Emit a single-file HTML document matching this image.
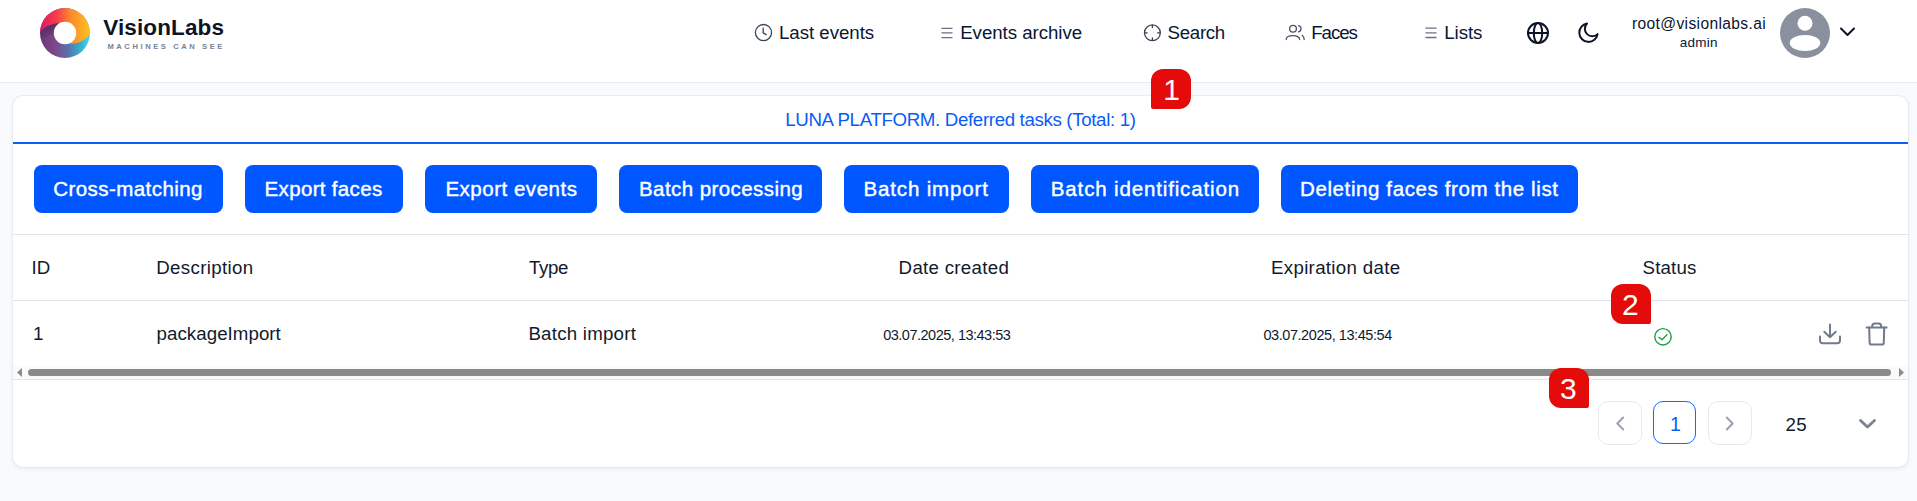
<!DOCTYPE html>
<html><head><meta charset="utf-8">
<style>
html,body{margin:0;padding:0;}
body{width:1917px;height:501px;overflow:hidden;background:#f9fafd;position:relative;font-family:"Liberation Sans",sans-serif;}
.t{position:absolute;white-space:nowrap;line-height:1;font-family:"Liberation Sans",sans-serif;}
.a{position:absolute;}
svg{position:absolute;overflow:visible;}
</style></head><body>
<!-- header -->
<div class="a" style="left:0;top:0;width:1917px;height:82px;background:#fff;border-bottom:1px solid #e7eaf0;"></div>
<!-- logo -->
<svg style="left:40px;top:8px" width="50" height="50" viewBox="0 0 50 50">
  <defs>
    <linearGradient id="gtop" x1="0" y1="0" x2="1" y2="0">
      <stop offset="0" stop-color="#de145f"/>
      <stop offset="0.35" stop-color="#f63e4b"/>
      <stop offset="0.62" stop-color="#fd8c2c"/>
      <stop offset="1" stop-color="#fdc81f"/>
    </linearGradient>
    <linearGradient id="gbot" x1="0" y1="0" x2="1" y2="0">
      <stop offset="0" stop-color="#6a3575"/>
      <stop offset="0.3" stop-color="#7d4789"/>
      <stop offset="0.55" stop-color="#5d6fa8"/>
      <stop offset="0.8" stop-color="#30b5d2"/>
      <stop offset="1" stop-color="#62dcef"/>
    </linearGradient>
    <linearGradient id="gsh" x1="0" y1="0" x2="0" y2="1">
      <stop offset="0" stop-color="#2a0f3a" stop-opacity="0.45"/>
      <stop offset="1" stop-color="#2a0f3a" stop-opacity="0"/>
    </linearGradient>
    <clipPath id="lclip"><circle cx="25" cy="25" r="25"/></clipPath>
  </defs>
  <g clip-path="url(#lclip)">
  <rect x="-2" y="-2" width="54" height="54" fill="url(#gbot)"/>
  <path d="M0.2,23.6 C4,19 11,15.5 19,15 L16,26 C10,26 4,30 0,34 Z" fill="url(#gsh)"/>
  <path d="M-2,24.2 L-2,-2 L52,-2 L52,25 L50,25.5 C47,31 40,35 31,36 L25,25 L19,15 C11,15.5 4,19 0.2,23.6 Z" fill="url(#gtop)"/>
  </g>
  <circle cx="25" cy="25" r="11.2" fill="#fff"/>
</svg>
<!-- nav icons -->
<svg style="left:754px;top:23px" width="19" height="19" viewBox="0 0 19 19" fill="none" stroke="#3a4457" stroke-width="1.3" stroke-linecap="round">
  <circle cx="9.5" cy="9.6" r="8.1"/>
  <path d="M9.2,5.2 V9.8 L12.2,11.6"/>
</svg>
<svg style="left:940px;top:27px" width="13" height="12" viewBox="0 0 12 12" fill="none" stroke="#6a7182" stroke-width="1.3">
  <path d="M1,1.4 H12 M1,5.9 H12 M1,10.6 H12"/>
</svg>
<svg style="left:1143px;top:23px" width="19" height="19" viewBox="0 0 19 19" fill="none" stroke="#3a4457" stroke-width="1.3" stroke-linecap="round">
  <circle cx="9.4" cy="9.8" r="7.9"/>
  <path d="M9.4,2.2 V4.6 M9.4,15 V17.4 M1.8,9.8 H4.2 M14.6,9.8 H17"/>
</svg>
<svg style="left:1285px;top:24px" width="21" height="17" viewBox="0 0 21 17" fill="none" stroke="#4a5366" stroke-width="1.3" stroke-linecap="round">
  <circle cx="8" cy="4.7" r="3.4"/>
  <path d="M1.2,15.6 C1.2,10.4 14.7,10.4 14.7,15.6"/>
  <path d="M13.6,1.6 A3.2,3.2 0 0 1 13.6,7.8"/>
  <path d="M17.3,11.4 C18.6,12.4 19.2,13.8 19.2,15.6"/>
</svg>
<svg style="left:1424px;top:27px" width="13" height="12" viewBox="0 0 12 12" fill="none" stroke="#6a7182" stroke-width="1.3">
  <path d="M1,1.2 H12 M1,5.8 H12 M1,10.5 H12"/>
</svg>
<svg style="left:1526px;top:21px" width="24" height="24" viewBox="0 0 24 24" fill="none" stroke="#0b1426" stroke-width="2">
  <circle cx="12" cy="12" r="10"/>
  <path d="M2,12 H22"/>
  <ellipse cx="12" cy="12" rx="4.2" ry="10"/>
</svg>
<svg style="left:1576px;top:20.7px" width="24" height="24" viewBox="0 0 24 24" fill="none" stroke="#0b1426" stroke-width="2" stroke-linecap="round" stroke-linejoin="round">
  <path d="M21.6,13.1 A9.2,9.2 0 1 1 11,2.6 A7.1,7.1 0 0 0 21.6,13.1 Z"/>
</svg>
<!-- avatar -->
<svg style="left:1780px;top:8px" width="50" height="50" viewBox="0 0 50 50">
  <circle cx="25" cy="25" r="25" fill="#8a909e"/>
  <circle cx="25" cy="15.3" r="7.5" fill="#fff"/>
  <ellipse cx="25" cy="35" rx="15.3" ry="8" fill="#fff"/>
</svg>
<svg style="left:1839px;top:26px" width="17" height="12" viewBox="0 0 17 12" fill="none" stroke="#0b1426" stroke-width="2" stroke-linecap="round" stroke-linejoin="round">
  <path d="M2,2.5 L8.5,9 L15,2.5"/>
</svg>
<!-- card -->
<div class="a" style="left:13px;top:96px;width:1895px;height:371px;background:#fff;border-radius:10px;box-shadow:0 0 0 1px rgba(215,221,233,0.45),0 2px 5px rgba(30,45,80,0.07);"></div>
<div class="a" style="left:13px;top:142px;width:1895px;height:2px;background:#0f5ef5;"></div>
<!-- buttons -->
<div class="a" style="left:34px;top:165px;width:189px;height:48px;background:#0057ff;border-radius:8px;"></div>
<div class="a" style="left:245px;top:165px;width:158px;height:48px;background:#0057ff;border-radius:8px;"></div>
<div class="a" style="left:425px;top:165px;width:172px;height:48px;background:#0057ff;border-radius:8px;"></div>
<div class="a" style="left:619px;top:165px;width:203px;height:48px;background:#0057ff;border-radius:8px;"></div>
<div class="a" style="left:844px;top:165px;width:165px;height:48px;background:#0057ff;border-radius:8px;"></div>
<div class="a" style="left:1031px;top:165px;width:228px;height:48px;background:#0057ff;border-radius:8px;"></div>
<div class="a" style="left:1281px;top:165px;width:297px;height:48px;background:#0057ff;border-radius:8px;"></div>
<!-- table lines -->
<div class="a" style="left:13px;top:234px;width:1895px;height:1px;background:#dfe4ec;"></div>
<div class="a" style="left:13px;top:300px;width:1895px;height:1px;background:#dfe4ec;"></div>
<!-- scrollbar -->
<div class="a" style="left:13px;top:366px;width:1895px;height:13px;background:#fafafa;"></div>
<div class="a" style="left:28px;top:369px;width:1863px;height:7px;background:#8a8a8a;border-radius:3.5px;"></div>
<svg style="left:16px;top:367px" width="7" height="11" viewBox="0 0 7 11"><path d="M1,5.5 L6,1 V10 Z" fill="#8a8a8a"/></svg>
<svg style="left:1898px;top:367px" width="7" height="11" viewBox="0 0 7 11"><path d="M6,5.5 L1,1 V10 Z" fill="#8a8a8a"/></svg>
<div class="a" style="left:13px;top:379px;width:1895px;height:1px;background:#e2e6ee;"></div>
<!-- status & actions -->
<svg style="left:1653px;top:327px" width="20" height="20" viewBox="0 0 20 20" fill="none" stroke="#1f9d45" stroke-width="1.4" stroke-linecap="round" stroke-linejoin="round">
  <circle cx="10" cy="9.8" r="8.2"/>
  <path d="M6,10.2 L9,12.8 L14,7.8"/>
</svg>
<svg style="left:1818px;top:322px" width="24" height="24" viewBox="0 0 24 24" fill="none" stroke="#717a8c" stroke-width="2" stroke-linecap="round" stroke-linejoin="round">
  <path d="M12,2.4 V15.2 M6.3,9.8 L12,15.2 L17.7,9.8"/>
  <path d="M2,14.6 V18.6 A2.6,2.6 0 0 0 4.6,21.2 H19.4 A2.6,2.6 0 0 0 22,18.6 V14.6"/>
</svg>
<svg style="left:1865px;top:321px" width="24" height="26" viewBox="0 0 24 26" fill="none" stroke="#717a8c" stroke-width="2" stroke-linecap="round" stroke-linejoin="round">
  <path d="M1.6,6.4 H21.6"/>
  <path d="M7.2,6.2 V5.2 A2.6,2.6 0 0 1 9.8,2.6 H13.6 A2.6,2.6 0 0 1 16.2,5.2 V6.2"/>
  <path d="M4.2,6.6 L4.6,21.4 A2.2,2.2 0 0 0 6.8,23.6 H16.6 A2.2,2.2 0 0 0 18.8,21.4 L19.2,6.6"/>
</svg>
<!-- pagination -->
<div class="a" style="left:1598px;top:401px;width:42px;height:42px;border:1px solid #e6e9f0;border-radius:10px;background:#fff;"></div>
<div class="a" style="left:1653px;top:401px;width:41px;height:41px;border:1.8px solid #1a66ff;border-radius:10px;background:#fff;"></div>
<div class="a" style="left:1708px;top:401px;width:42px;height:42px;border:1px solid #e6e9f0;border-radius:10px;background:#fff;"></div>
<svg style="left:1614px;top:415px" width="12" height="17" viewBox="0 0 12 17" fill="none" stroke="#9aa2b1" stroke-width="2" stroke-linecap="round" stroke-linejoin="round">
  <path d="M9.2,2.5 L3.3,8.5 L9.2,14.5"/>
</svg>
<svg style="left:1724px;top:415px" width="12" height="17" viewBox="0 0 12 17" fill="none" stroke="#9aa2b1" stroke-width="2" stroke-linecap="round" stroke-linejoin="round">
  <path d="M2.8,2.5 L8.7,8.5 L2.8,14.5"/>
</svg>
<svg style="left:1858px;top:418px" width="19" height="12" viewBox="0 0 19 12" fill="none" stroke="#7b8292" stroke-width="2.8" stroke-linecap="round" stroke-linejoin="round">
  <path d="M2.5,2.5 L9.5,9 L16.5,2.5"/>
</svg>
<!-- badges -->
<div class="a" style="left:1151px;top:68.5px;width:40px;height:40px;background:#e50b0b;border-radius:12px 12px 12px 2px;"></div>
<div class="a" style="left:1611px;top:283.5px;width:40px;height:40px;background:#e50b0b;border-radius:12px 12px 2px 12px;"></div>
<div class="a" style="left:1549px;top:368px;width:40px;height:40px;background:#e50b0b;border-radius:12px 12px 2px 12px;"></div>

<span class="t" style="left:103.20px;top:17.00px;font-size:22.5px;font-weight:bold;letter-spacing:0.133px;color:#0c1426">VisionLabs</span>
<span class="t" style="left:107.40px;top:43.00px;font-size:7.6px;font-weight:bold;letter-spacing:2.573px;color:#7a8193">MACHINES CAN SEE</span>
<span class="t" style="left:779.00px;top:24.00px;font-size:18.7px;font-weight:normal;letter-spacing:-0.040px;color:#0b1631">Last events</span>
<span class="t" style="left:960.20px;top:24.00px;font-size:18.7px;font-weight:normal;letter-spacing:-0.046px;color:#0b1631">Events archive</span>
<span class="t" style="left:1167.60px;top:24.00px;font-size:18.7px;font-weight:normal;letter-spacing:-0.320px;color:#0b1631">Search</span>
<span class="t" style="left:1311.20px;top:24.00px;font-size:18.7px;font-weight:normal;letter-spacing:-1.050px;color:#0b1631">Faces</span>
<span class="t" style="left:1444.20px;top:24.00px;font-size:18.7px;font-weight:normal;letter-spacing:-0.050px;color:#0b1631">Lists</span>
<span class="t" style="left:1632.00px;top:16.00px;font-size:15.6px;font-weight:normal;letter-spacing:0.353px;color:#0b1631">root@visionlabs.ai</span>
<span class="t" style="left:1679.80px;top:36.00px;font-size:13.5px;font-weight:normal;letter-spacing:0.250px;color:#0b1631">admin</span>
<span class="t" style="left:785.20px;top:111.00px;font-size:18.7px;font-weight:normal;letter-spacing:-0.344px;color:#0a5cf5">LUNA PLATFORM. Deferred tasks (Total: 1)</span>
<span class="t" style="left:53.20px;top:179.00px;font-size:20.5px;font-weight:normal;letter-spacing:0.446px;color:#ffffff;-webkit-text-stroke:0.4px #ffffff">Cross-matching</span>
<span class="t" style="left:264.60px;top:179.00px;font-size:20.5px;font-weight:normal;letter-spacing:0.327px;color:#ffffff;-webkit-text-stroke:0.4px #ffffff">Export faces</span>
<span class="t" style="left:445.40px;top:179.00px;font-size:20.5px;font-weight:normal;letter-spacing:0.517px;color:#ffffff;-webkit-text-stroke:0.4px #ffffff">Export events</span>
<span class="t" style="left:639.00px;top:179.00px;font-size:20.5px;font-weight:normal;letter-spacing:0.427px;color:#ffffff;-webkit-text-stroke:0.4px #ffffff">Batch processing</span>
<span class="t" style="left:863.60px;top:179.00px;font-size:20.5px;font-weight:normal;letter-spacing:0.836px;color:#ffffff;-webkit-text-stroke:0.4px #ffffff">Batch import</span>
<span class="t" style="left:1050.80px;top:179.00px;font-size:20.5px;font-weight:normal;letter-spacing:0.853px;color:#ffffff;-webkit-text-stroke:0.4px #ffffff">Batch identification</span>
<span class="t" style="left:1300.00px;top:179.00px;font-size:20.5px;font-weight:normal;letter-spacing:0.607px;color:#ffffff;-webkit-text-stroke:0.4px #ffffff">Deleting faces from the list</span>
<span class="t" style="left:31.60px;top:259.00px;font-size:18.7px;font-weight:normal;letter-spacing:0.000px;color:#101a2e">ID</span>
<span class="t" style="left:156.20px;top:259.00px;font-size:18.7px;font-weight:normal;letter-spacing:0.360px;color:#101a2e">Description</span>
<span class="t" style="left:529.00px;top:259.00px;font-size:18.7px;font-weight:normal;letter-spacing:-0.333px;color:#101a2e">Type</span>
<span class="t" style="left:898.60px;top:259.00px;font-size:18.7px;font-weight:normal;letter-spacing:0.291px;color:#101a2e">Date created</span>
<span class="t" style="left:1271.00px;top:259.00px;font-size:18.7px;font-weight:normal;letter-spacing:0.314px;color:#101a2e">Expiration date</span>
<span class="t" style="left:1642.60px;top:259.00px;font-size:18.7px;font-weight:normal;letter-spacing:0.160px;color:#101a2e">Status</span>
<span class="t" style="left:33.00px;top:325.00px;font-size:18.7px;font-weight:normal;letter-spacing:0.000px;color:#101a2e">1</span>
<span class="t" style="left:156.60px;top:325.00px;font-size:18.7px;font-weight:normal;letter-spacing:0.050px;color:#101a2e">packageImport</span>
<span class="t" style="left:528.40px;top:325.00px;font-size:18.7px;font-weight:normal;letter-spacing:0.236px;color:#101a2e">Batch import</span>
<span class="t" style="left:883.20px;top:328.00px;font-size:14.5px;font-weight:normal;letter-spacing:-0.495px;color:#101a2e">03.07.2025, 13:43:53</span>
<span class="t" style="left:1263.40px;top:328.00px;font-size:14.5px;font-weight:normal;letter-spacing:-0.432px;color:#101a2e">03.07.2025, 13:45:54</span>
<span class="t" style="left:1670.00px;top:415.00px;font-size:19.5px;font-weight:normal;letter-spacing:0.000px;color:#0a5cf5">1</span>
<span class="t" style="left:1785.60px;top:416.00px;font-size:18.7px;font-weight:normal;letter-spacing:0.200px;color:#101a2e">25</span>
<span class="t" style="left:1163.20px;top:75.00px;font-size:30px;font-weight:normal;letter-spacing:0.000px;color:#ffffff">1</span>
<span class="t" style="left:1622.00px;top:290.00px;font-size:30px;font-weight:normal;letter-spacing:0.000px;color:#ffffff">2</span>
<span class="t" style="left:1560.00px;top:374.00px;font-size:30px;font-weight:normal;letter-spacing:0.000px;color:#ffffff">3</span>
</body></html>
